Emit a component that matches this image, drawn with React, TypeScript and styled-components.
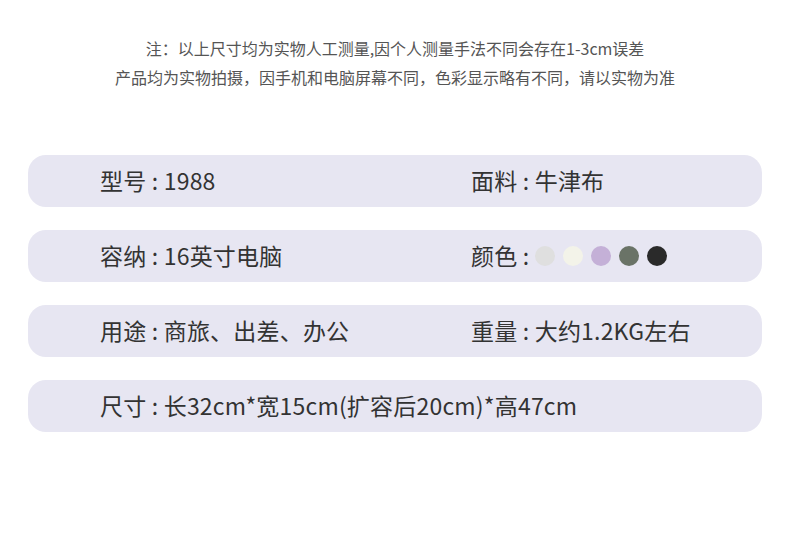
import React from "react";
import styled, { createGlobalStyle } from "styled-components";

const Global = createGlobalStyle`
  html, body { margin: 0; padding: 0; background: #ffffff; }
  body { font-family: "Noto Sans CJK SC", "Noto Sans", sans-serif; }
`;

const Page = styled.div`
  width: 790px;
  height: 534px;
  box-sizing: border-box;
  padding: 37px 28px 0;
  background: #fff;
`;

const Notes = styled.div`
  display: flex;
  flex-direction: column;
  align-items: center;
  gap: 7px;
  color: #555;
  font-size: 16px;
  line-height: 22px;
`;

const Rows = styled.div`
  margin-top: 67px;
  display: flex;
  flex-direction: column;
  gap: 23px;
`;

const Bar = styled.div`
  height: 52px;
  box-sizing: border-box;
  padding: 0 0 3px 72px;
  border-radius: 18px;
  background: #e7e6f2;
  display: grid;
  grid-template-columns: 371px 1fr;
  align-items: center;
  color: #333;
  font-size: 23px;
  letter-spacing: 0.2px;
`;

const Cell = styled.div`
  display: flex;
  align-items: center;
  gap: 6px;
  white-space: nowrap;
`;

const Dots = styled.div`
  display: flex;
  gap: 8px;
  padding-top: 2px;
`;

const Dot = styled.span<{ $c: string }>`
  width: 20px;
  height: 20px;
  border-radius: 50%;
  background: ${(p) => p.$c};
`;

const colors = ["#dfdfdf", "#f3f3e9", "#c4b0d7", "#6a7367", "#2a2a2a"];

export default function App() {
  return (
    <>
      <Global />
      <Page>
        <Notes>
          <div>注：以上尺寸均为实物人工测量,因个人测量手法不同会存在1-3cm误差</div>
          <div>产品均为实物拍摄，因手机和电脑屏幕不同，色彩显示略有不同，请以实物为准</div>
        </Notes>
        <Rows>
          <Bar>
            <Cell>型号 : 1988</Cell>
            <Cell>面料 : 牛津布</Cell>
          </Bar>
          <Bar>
            <Cell>容纳 : 16英寸电脑</Cell>
            <Cell>
              <span>颜色 :</span>
              <Dots>
                {colors.map((c) => (
                  <Dot key={c} $c={c} />
                ))}
              </Dots>
            </Cell>
          </Bar>
          <Bar>
            <Cell>用途 : 商旅、出差、办公</Cell>
            <Cell>重量 : 大约1.2KG左右</Cell>
          </Bar>
          <Bar>
            <Cell>尺寸 : 长32cm*宽15cm(扩容后20cm)*高47cm</Cell>
          </Bar>
        </Rows>
      </Page>
    </>
  );
}
